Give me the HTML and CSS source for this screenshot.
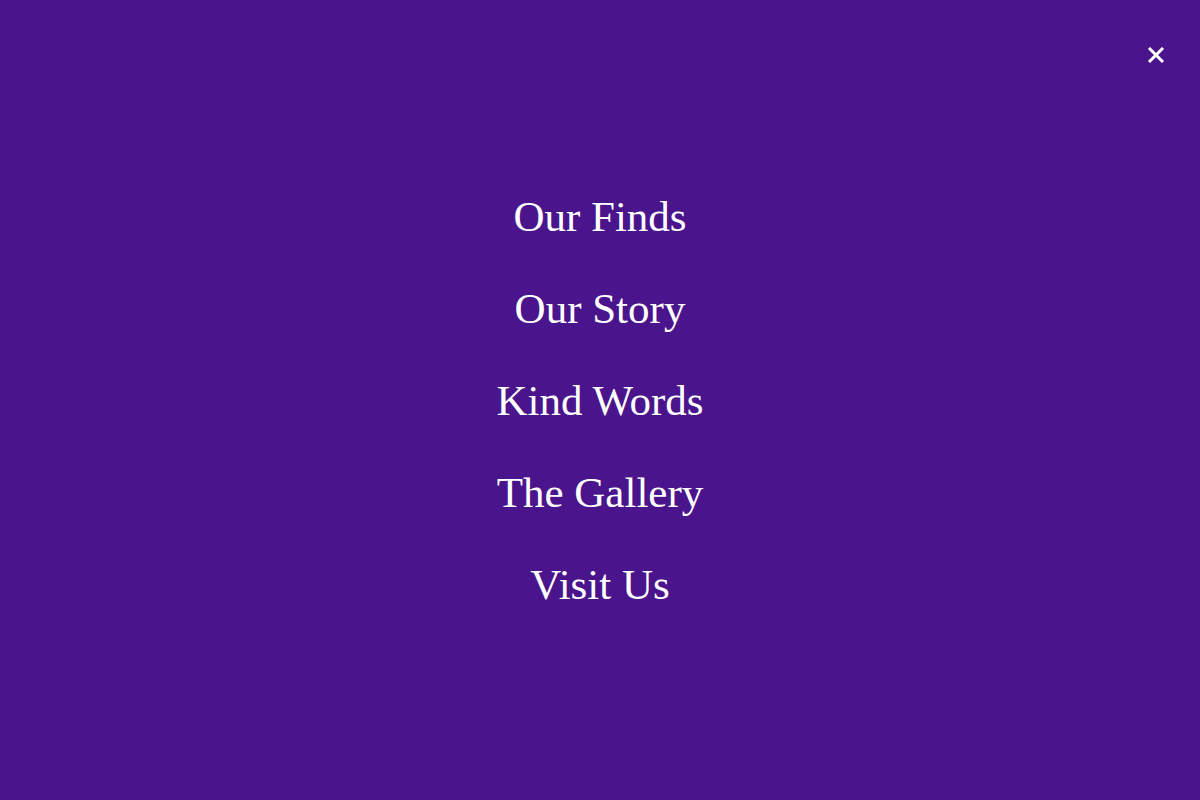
FILE: index.html
```html
<!DOCTYPE html>
<html lang="en">
<head>
<meta charset="utf-8">
<title>Menu</title>
<link rel="stylesheet" href="styles.css">
</head>
<body>
<div class="overlay">
  <button class="close" aria-label="Close menu">
    <svg viewBox="0 0 20 20" width="20" height="20"><path d="M3 3 L17 17 M17 3 L3 17" stroke="#fff" stroke-width="3" stroke-linecap="butt" fill="none"/></svg>
  </button>
  <nav class="menu">
    <a href="#">Our Finds</a>
    <a href="#">Our Story</a>
    <a href="#">Kind Words</a>
    <a href="#">The Gallery</a>
    <a href="#">Visit Us</a>
  </nav>
</div>
</body>
</html>
```
FILE: styles.css
```css
html, body {
  margin: 0;
  padding: 0;
  height: 100%;
}
body {
  background: #4a148c;
  font-family: "Liberation Serif", "DejaVu Serif", serif;
}
.overlay {
  position: relative;
  height: 100vh;
  display: flex;
  align-items: center;
  justify-content: center;
}
.close {
  position: absolute;
  top: 45px;
  right: 34px;
  width: 20px;
  height: 20px;
  padding: 0;
  border: 0;
  background: none;
  cursor: pointer;
  display: flex;
}
.menu {
  display: flex;
  flex-direction: column;
  align-items: center;
  padding-top: 1px;
}
.menu a {
  height: 92px;
  display: flex;
  align-items: center;
  color: #ffffff;
  text-decoration: none;
  font-size: 43px;
  line-height: 1;
}
```
